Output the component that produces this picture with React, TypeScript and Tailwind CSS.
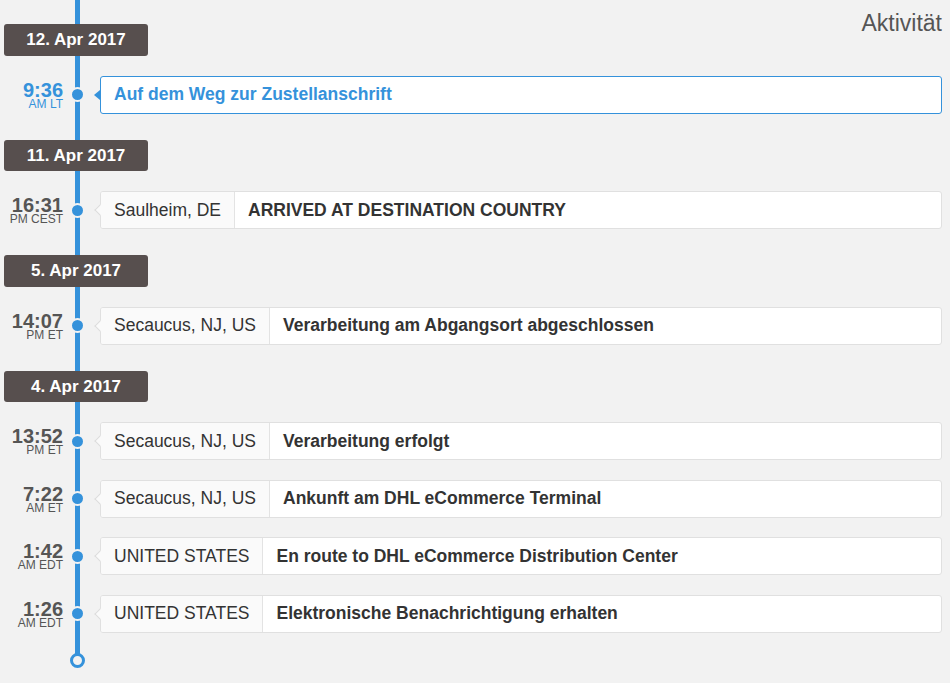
import React from 'react';

type Event = {
  time: string;
  zone: string;
  location?: string;
  text: string;
  current?: boolean;
};

type Day = {
  date: string;
  events: Event[];
};

const days: Day[] = [
  {
    date: '12. Apr 2017',
    events: [{ time: '9:36', zone: 'AM LT', text: 'Auf dem Weg zur Zustellanschrift', current: true }],
  },
  {
    date: '11. Apr 2017',
    events: [{ time: '16:31', zone: 'PM CEST', location: 'Saulheim, DE', text: 'ARRIVED AT DESTINATION COUNTRY' }],
  },
  {
    date: '5. Apr 2017',
    events: [
      { time: '14:07', zone: 'PM ET', location: 'Secaucus, NJ, US', text: 'Verarbeitung am Abgangsort abgeschlossen' },
    ],
  },
  {
    date: '4. Apr 2017',
    events: [
      { time: '13:52', zone: 'PM ET', location: 'Secaucus, NJ, US', text: 'Verarbeitung erfolgt' },
      { time: '7:22', zone: 'AM ET', location: 'Secaucus, NJ, US', text: 'Ankunft am DHL eCommerce Terminal' },
      { time: '1:42', zone: 'AM EDT', location: 'UNITED STATES', text: 'En route to DHL eCommerce Distribution Center' },
      { time: '1:26', zone: 'AM EDT', location: 'UNITED STATES', text: 'Elektronische Benachrichtigung erhalten' },
    ],
  },
];

const DateBadge: React.FC<{ date: string; first?: boolean }> = ({ date, first }) => (
  <div
    className={`ml-[4px] w-[144px] h-[31.5px] rounded-[3px] bg-[#574f4e] text-white text-[17px] font-bold flex items-center justify-center ${
      first ? 'mt-[24px]' : 'mt-[26px]'
    }`}
  >
    {date}
  </div>
);

const EventRow: React.FC<{ event: Event; afterBadge: boolean }> = ({ event, afterBadge }) => (
  <div className={`flex items-center ${afterBadge ? 'mt-[20px]' : 'mt-[19.5px]'}`}>
    {/* time */}
    <div className={`w-[63px] text-right ${event.current ? 'text-[#3592db]' : 'text-[#555]'}`}>
      <div className="text-[20px] font-bold leading-[18px]">{event.time}</div>
      <div className="text-[12px] leading-[10px]">{event.zone}</div>
    </div>

    {/* dot */}
    <div className="w-[29px] flex justify-center">
      <div className="w-[15px] h-[15px] rounded-full bg-[#3592db] border-2 border-[#f2f2f2]" />
    </div>

    {/* card */}
    <div className="relative flex-1 ml-[8px]">
      {event.current ? (
        <>
          <div className="absolute left-[-6px] top-1/2 -translate-y-1/2 w-0 h-0 border-y-[5px] border-y-transparent border-r-[6px] border-r-[#3592db]" />
          <div className="h-[38px] flex items-center rounded-[3px] border border-[#3592db] bg-white px-[13px] text-[17.5px] font-bold text-[#3592db]">
            {event.text}
          </div>
        </>
      ) : (
        <>
          <div className="h-[38px] flex rounded-[3px] border border-[#e0e0e0] bg-white overflow-hidden">
            <div className="flex items-center px-[13px] bg-[#fafafa] border-r border-[#e3e3e3] text-[17.5px] text-[#333]">
              {event.location}
            </div>
            <div className="flex items-center px-[13px] text-[17.5px] font-bold text-[#333]">{event.text}</div>
          </div>
          <div className="absolute left-[-4px] top-1/2 -mt-[4px] w-[8px] h-[8px] rotate-45 border-l border-b border-[#dcdcdc] bg-[#fafafa]" />
        </>
      )}
    </div>
  </div>
);

export default function App() {
  return (
    <div className="min-h-screen bg-[#f2f2f2] font-['Liberation_Sans',Arial,sans-serif] pr-[8px]">
      <div className="relative isolate">
        {/* timeline line */}
        <div className="absolute left-[75px] top-0 bottom-[8px] w-[5px] bg-[#3592db] -z-10" />

        {days.map((day, di) => (
          <div key={day.date}>
            {di === 0 ? (
              <div className="flex justify-between items-start">
                <DateBadge date={day.date} first />
                <h2 className="mt-[10px] text-[23px] leading-[26px] text-[#555] font-normal">Aktivität</h2>
              </div>
            ) : (
              <DateBadge date={day.date} />
            )}
            {day.events.map((ev, ei) => (
              <EventRow key={ev.time + ev.text} event={ev} afterBadge={ei === 0} />
            ))}
          </div>
        ))}

        {/* end circle */}
        <div className="mt-[20.5px] ml-[70px] w-[15px] h-[15px] rounded-full border-[3px] border-[#3592db] bg-[#f2f2f2]" />
      </div>
    </div>
  );
}
